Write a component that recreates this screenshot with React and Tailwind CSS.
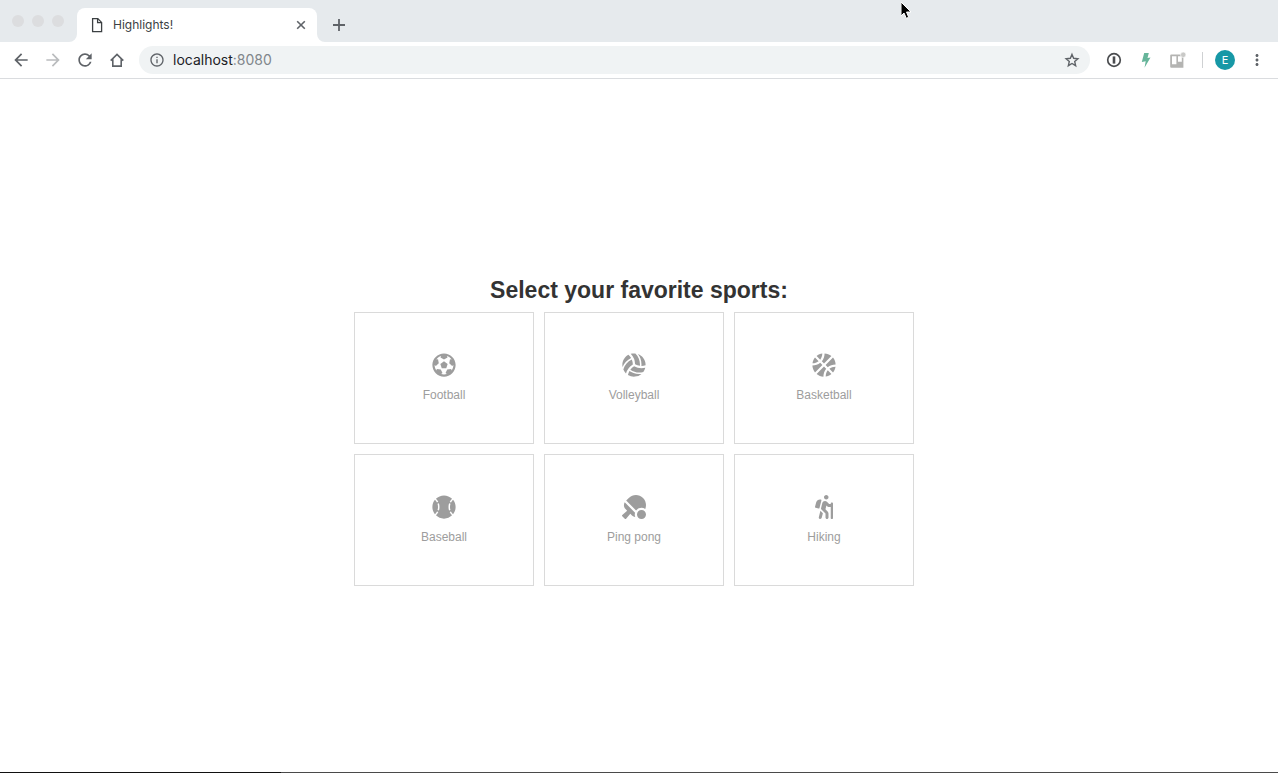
import { useState } from "react";
import {
  FaFutbol,
  FaVolleyballBall,
  FaBasketballBall,
  FaBaseballBall,
  FaTableTennis,
  FaHiking,
} from "react-icons/fa";
import {
  MdArrowBack,
  MdArrowForward,
  MdRefresh,
  MdInfoOutline,
  MdMoreVert,
} from "react-icons/md";

const SPORTS = [
  { name: "Football", Icon: FaFutbol },
  { name: "Volleyball", Icon: FaVolleyballBall },
  { name: "Basketball", Icon: FaBasketballBall },
  { name: "Baseball", Icon: FaBaseballBall },
  { name: "Ping pong", Icon: FaTableTennis },
  { name: "Hiking", Icon: FaHiking },
];

function TabStrip() {
  return (
    <div className="relative flex h-[42px] items-end bg-[#e6eaed]">
      <div className="flex w-[77px] gap-2 self-start pt-[15px] pl-3">
        <span className="size-3 rounded-full bg-[#dcdddf]" />
        <span className="size-3 rounded-full bg-[#dcdddf]" />
        <span className="size-3 rounded-full bg-[#dcdddf]" />
      </div>
      <div className="relative flex h-[34px] w-60 items-center rounded-t-lg bg-white pr-2 pl-3">
        <svg className="absolute bottom-0 -left-2 size-2" viewBox="0 0 8 8" aria-hidden="true">
          <path d="M8 0v8H0a8 8 0 0 0 8-8z" fill="#fff" />
        </svg>
        <svg className="absolute -right-2 bottom-0 size-2" viewBox="0 0 8 8" aria-hidden="true">
          <path d="M0 0v8h8a8 8 0 0 1-8-8z" fill="#fff" />
        </svg>
        <svg className="size-4 text-[#3c4043]" viewBox="0 0 16 16" fill="none" stroke="currentColor" strokeWidth="1.3" aria-hidden="true">
          <path d="M3.6 1.6h5.2l3.8 3.8v9.2h-9z" />
          <path d="M8.6 1.8v3.8h3.8" />
        </svg>
        <span className="ml-2 flex-1 text-xs text-[#3c4043]">Highlights!</span>
        <button type="button" aria-label="Close tab" className="text-[#5f6368]">
          <svg className="size-4" viewBox="0 0 16 16" stroke="currentColor" strokeWidth="1.6" aria-hidden="true">
            <path d="M4.2 4.2l7.600 7.600M11.800 4.200l-7.600 7.600" />
          </svg>
        </button>
      </div>
      <button type="button" aria-label="New tab" className="ml-3 flex h-[34px] items-center text-[#5f6368]">
        <svg className="size-5" viewBox="0 0 20 20" stroke="currentColor" strokeWidth="1.8" aria-hidden="true">
          <path d="M10 4v12M4 10h12" />
        </svg>
      </button>
      <svg className="absolute top-0 left-[70.5%] h-5 w-4" viewBox="0 0 16 20" aria-hidden="true">
        <path d="M0 2v14l3-3 2.3 5.3 2.4-1L5.5 12H10z" fill="#000" stroke="#fff" strokeWidth="1" />
      </svg>
    </div>
  );
}

function Toolbar() {
  return (
    <div className="flex h-[37px] items-center border-b border-[#dadcdf] bg-white px-3 text-[#5f6368]">
      <div className="-ml-px flex gap-3">
        <button type="button" aria-label="Back">
          <MdArrowBack className="size-5" />
        </button>
        <button type="button" aria-label="Forward" className="text-[#babcbe]">
          <MdArrowForward className="size-5" />
        </button>
        <button type="button" aria-label="Reload">
          <MdRefresh className="size-5" />
        </button>
        <button type="button" aria-label="Home">
          <svg className="size-5" viewBox="0 0 20 20" fill="none" stroke="currentColor" strokeWidth="1.6" aria-hidden="true">
            <path d="M3.7 10.6 10 4.4l6.3 6.2M5.8 9.2v6.9h8.4V9.2" />
          </svg>
        </button>
      </div>
      <div className="ml-3 flex h-7 flex-1 items-center rounded-full bg-[#f0f3f4] px-2.5">
        <MdInfoOutline className="size-4" />
        <a href="#address" className="ml-2 flex-1 text-sm text-[#202124]">
          localhost<span className="text-[#80868b]">:8080</span>
        </a>
        <button type="button" aria-label="Bookmark this page">
          <svg className="size-4" viewBox="0 0 16 16" fill="none" stroke="currentColor" strokeWidth="1.400" aria-hidden="true">
            <path d="M8 2.400 9.650 6.300 13.900 6.700 10.700 9.500 11.650 13.700 8 11.450 4.350 13.700 5.300 9.500 2.100 6.700 6.350 6.300z" />
          </svg>
        </button>
      </div>
      <div className="ml-4 flex items-center gap-4">
        <button type="button" aria-label="Password manager">
          <svg className="size-4" viewBox="0 0 16 16" fill="none" aria-hidden="true">
            <circle cx="8" cy="8" r="6.3" stroke="#4a4c4f" strokeWidth="1.7" />
            <path d="M8 4.4v7.2" stroke="#4a4c4f" strokeWidth="2.6" />
          </svg>
        </button>
        <button type="button" aria-label="Lightning extension">
          <svg className="size-4" viewBox="0 0 16 16" aria-hidden="true">
            <path d="M6.200 1h4.600L9.500 5.900l3-.5L6.500 15.800l1.200-6.500-3.900.8z" fill="#66b59a" />
          </svg>
        </button>
        <button type="button" aria-label="Boards">
          <svg className="size-4" viewBox="0 0 16 16" aria-hidden="true">
            <path
              d="M1.200 2.500h12.200v13.200H1.200a1 1 0 0 1-1-1V3.500a1 1 0 0 1 1-1zM2 4.300v8h4.400v-8zm6 0v5.400h3.800V4.300z"
              fill="#b4b4b2"
              fillRule="evenodd"
            />
            <circle cx="13.200" cy="2.800" r="2.700" fill="#c9c9c7" stroke="#fff" strokeWidth="0.600" />
          </svg>
        </button>
      </div>
      <span className="ml-4 h-4 w-px bg-[#cfd1d3]" />
      <button
        type="button"
        aria-label="Profile"
        className="ml-3 grid size-5 place-items-center rounded-full bg-[#1798a6] text-[11px] text-white"
      >
        E
      </button>
      <button type="button" aria-label="Menu" className="ml-[13px]">
        <MdMoreVert className="size-[18px]" />
      </button>
    </div>
  );
}

function SportCard({ name, Icon, selected, onToggle }) {
  return (
    <button
      type="button"
      aria-pressed={selected}
      onClick={onToggle}
      className="flex h-[132px] w-[180px] flex-col items-center justify-center gap-2.5 border border-[#dadada] bg-white text-[#9d9d9d] aria-pressed:border-[#333] aria-pressed:text-[#333]"
    >
      <Icon className="size-6" />
      <span className="text-xs">{name}</span>
    </button>
  );
}

export default function App() {
  const [selected, setSelected] = useState([]);
  const toggle = (name) =>
    setSelected((list) =>
      list.includes(name) ? list.filter((n) => n !== name) : [...list, name]
    );

  return (
    <div className="flex min-h-screen flex-col bg-white font-['Inter',sans-serif]">
      <header>
        <TabStrip />
        <Toolbar />
      </header>
      <main className="flex flex-1 flex-col items-center justify-center pt-2 font-['Liberation_Sans',sans-serif]">
        <h1 className="text-[23px] leading-8 font-bold text-[#333]">Select your favorite sports:</h1>
        <div className="mt-1.5 mr-2.5 flex max-w-[560px] flex-wrap gap-2.5">
          {SPORTS.map((sport) => (
            <SportCard
              key={sport.name}
              name={sport.name}
              Icon={sport.Icon}
              selected={selected.includes(sport.name)}
              onToggle={() => toggle(sport.name)}
            />
          ))}
        </div>
      </main>
      <div className="flex h-px">
        <span className="w-[22%] bg-[#111]" />
        <span className="flex-1 bg-[#4a4a4a]" />
      </div>
    </div>
  );
}
